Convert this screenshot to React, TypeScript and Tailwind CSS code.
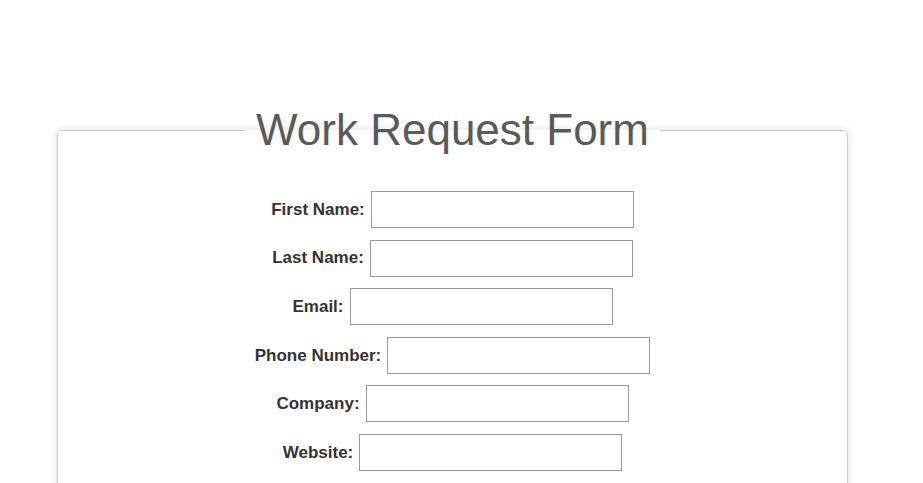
const fields = [
  { id: "first", label: "First Name:", type: "text" },
  { id: "last", label: "Last Name:", type: "text" },
  { id: "email", label: "Email:", type: "email" },
  { id: "phone", label: "Phone Number:", type: "tel" },
  { id: "company", label: "Company:", type: "text" },
  { id: "website", label: "Website:", type: "url" },
];

export default function App() {
  return (
    <div className="min-h-screen bg-white font-['Liberation_Sans',Arial,sans-serif] pt-[97px] pl-[57px] pr-[75px]">
      <form>
        <fieldset className="border border-[#cccccc] rounded-[5px] shadow-[0_0_10px_rgba(0,0,0,0.12)] pb-8">
          <legend className="mx-auto px-[11px] text-[44px] text-[#5a5a5a]">
            Work Request Form
          </legend>
          <div className="flex flex-col items-center gap-[11.6px] pt-[28px]">
            {fields.map((f) => (
              <div key={f.id} className="flex items-center gap-[6px]">
                <label htmlFor={f.id} className="text-[17px] font-bold text-[#333333]">
                  {f.label}
                </label>
                <input
                  id={f.id}
                  type={f.type}
                  className="w-[263px] h-[37px] border border-[#999999] bg-white"
                />
              </div>
            ))}
          </div>
        </fieldset>
      </form>
    </div>
  );
}
